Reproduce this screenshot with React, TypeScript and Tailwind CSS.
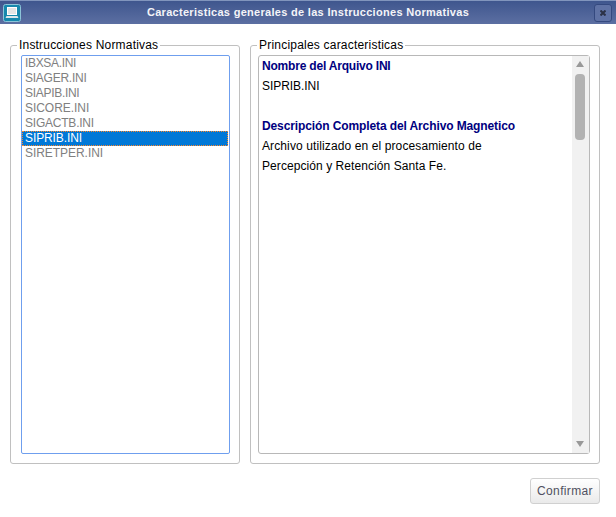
import React, { useState } from 'react';

const FILES = [
  { name: 'IBXSA.INI', spacing: 'tracking-[-0.33px]' },
  { name: 'SIAGER.INI', spacing: 'tracking-[-0.25px]' },
  { name: 'SIAPIB.INI', spacing: 'tracking-[-0.3px]' },
  { name: 'SICORE.INI', spacing: 'tracking-[-0.05px]' },
  { name: 'SIGACTB.INI', spacing: 'tracking-[-0.22px]' },
  { name: 'SIPRIB.INI', spacing: 'tracking-[-0.1px]' },
  { name: 'SIRETPER.INI', spacing: 'tracking-[-0.05px]' },
];

function WindowIcon() {
  return (
    <svg width="18" height="18" viewBox="0 0 18 18">
      <rect x="0.5" y="0.5" width="17" height="17" rx="2" fill="#1688ad" stroke="#8cc4d8" />
      <rect x="4.5" y="3.5" width="9" height="7" fill="#e4e4e4" stroke="#fff" />
      <path d="M3.5 12h11l1 2H2.5z" fill="#dbe6ea" />
    </svg>
  );
}

function TitleBar() {
  return (
    <header className="flex h-6 items-center border-t border-[#8195bd] bg-gradient-to-b from-[#3f568e] to-[#5c6fa2] pr-1 pl-[3px]">
      <WindowIcon />
      <h1 className="flex-1 pl-px text-center text-[11px] font-bold tracking-[0.3px] whitespace-nowrap text-[#f4f4f8]">
        Caracteristicas generales de las Instrucciones Normativas
      </h1>
      <button className="flex h-[18px] w-[18px] items-center justify-center rounded-[3px] border border-[#34497f] bg-[#5f72a5]">
        <svg width="6" height="6" viewBox="0 0 6 6">
          <path d="M0.5 0.5l5 5M5.5 0.5l-5 5" stroke="#2b3146" strokeWidth="2" />
        </svg>
      </button>
    </header>
  );
}

function Scrollbar() {
  return (
    <div className="flex w-[17px] flex-col items-center bg-[#f1f1f1] pt-[5px] pr-px pb-[6px]">
      <svg width="8" height="6" viewBox="0 0 8 6">
        <path d="M4 0l4 6H0z" fill="#999" />
      </svg>
      <div className="mt-[7px] h-[66px] w-[10px] rounded-[4px] bg-[#b2b2b2]" />
      <svg className="mt-auto" width="8" height="6" viewBox="0 0 8 6">
        <path d="M0 0h8L4 6z" fill="#999" />
      </svg>
    </div>
  );
}

export default function App() {
  const [selected, setSelected] = useState('SIPRIB.INI');

  return (
    <div className="h-[517px] w-[616px] overflow-hidden bg-white font-['Liberation_Sans',Arial,sans-serif] text-[12px] text-black">
      <TitleBar />
      <main className="flex gap-[10px] pt-[14px] pl-[10px]">
        <fieldset className="h-[426px] w-[230px] rounded-[3px] border border-[#c0c0c0] pt-[2px] pr-[9px] pb-[9px] pl-[10px]">
          <legend className="-ml-[4px] h-[15px] px-[2px] leading-[15px] tracking-[0.19px]">Instrucciones Normativas</legend>
          <ul className="h-[399px] rounded-[2px] border border-[#6f9fee]">
            {FILES.map(({ name, spacing }) => (
              <li
                key={name}
                onClick={() => setSelected(name)}
                className={
                  name === selected
                    ? `mr-px h-[15px] border border-dotted border-[#ff8728] bg-[#0078d7] pl-[2px] leading-[13px] text-white ${spacing}`
                    : `h-[15px] pl-[3px] leading-[15px] text-[#808080] ${spacing}`
                }
              >
                {name}
              </li>
            ))}
          </ul>
        </fieldset>
        <fieldset className="h-[426px] w-[350px] rounded-[3px] border border-[#c0c0c0] pt-[2px] pr-[9px] pb-[9px] pl-[7px]">
          <legend className="-ml-px h-[15px] px-[2px] leading-[15px] tracking-[0.21px]">Principales caracteristicas</legend>
          <div className="flex h-[399px] rounded-[3px] border border-[#b8b8b8]">
            <div className="flex-1 pl-[3px] leading-5">
              <p className="font-bold tracking-[-0.2px] text-[#000080]">Nombre del Arquivo INI</p>
              <p className="tracking-[-0.05px]">SIPRIB.INI</p>
              <p className="mt-5 font-bold tracking-[-0.11px] text-[#000080]">Descripción Completa del Archivo Magnetico</p>
              <p className="tracking-[0.11px]">Archivo utilizado en el procesamiento de</p>
              <p className="tracking-[0.07px]">Percepción y Retención Santa Fe.</p>
            </div>
            <Scrollbar />
          </div>
        </fieldset>
      </main>
      <footer className="flex justify-end pt-[14px] pr-4">
        <button className="h-[26px] w-[70px] rounded-[3px] border border-[#d0d0d0] bg-gradient-to-b from-white to-[#eaeaea] text-[12px] tracking-[0.35px] text-[#505060]">
          Confirmar
        </button>
      </footer>
    </div>
  );
}
